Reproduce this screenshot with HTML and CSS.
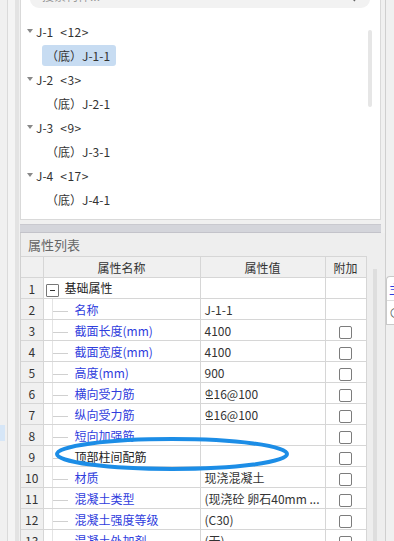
FILE: index.html
```html
<!DOCTYPE html>
<html lang="zh-CN">
<head>
    <meta charset="UTF-8">
    <meta name="viewport" content="width=device-width, initial-scale=1.0">
    <title>属性列表</title>
    <link rel="stylesheet" href="styles.css">
</head>
<body>
    <div class="screen">
        <div class="gutter">
            <div class="gutter-mark"></div>
        </div>

        <div class="workspace">
            <div class="tree-panel">
                <div class="search">
                    <span>搜索构件...</span>
                    <svg class="search-icon" width="10" height="10" viewBox="0 0 10 10">
                        <circle cx="4" cy="4" r="3" fill="none" stroke="#666" stroke-width="1.2"/>
                        <line x1="6.2" y1="6.2" x2="9" y2="9" stroke="#666" stroke-width="1.4"/>
                    </svg>
                </div>
                <div class="tree-body">
                    <div class="tree-list">
                        <div class="node"><i class="caret"></i>J-1<span class="count">&lt;12&gt;</span></div>
                        <div class="leaf"><span class="leaf-label selected">（底）J-1-1</span></div>
                        <div class="node"><i class="caret"></i>J-2<span class="count">&lt;3&gt;</span></div>
                        <div class="leaf"><span class="leaf-label">（底）J-2-1</span></div>
                        <div class="node"><i class="caret"></i>J-3<span class="count">&lt;9&gt;</span></div>
                        <div class="leaf"><span class="leaf-label">（底）J-3-1</span></div>
                        <div class="node"><i class="caret"></i>J-4<span class="count">&lt;17&gt;</span></div>
                        <div class="leaf"><span class="leaf-label">（底）J-4-1</span></div>
                        <div class="node"><i class="caret"></i>J-5<span class="count">&lt;6&gt;</span></div>
                    </div>
                    <div class="tree-scroll"><div class="thumb"></div></div>
                </div>
            </div>

            <div class="split-bar"></div>

            <div class="props">
                <div class="props-title">属性列表</div>
                <div class="props-body">
                    <table class="grid">
                        <colgroup>
                            <col class="c-num">
                            <col class="c-name">
                            <col class="c-val">
                            <col class="c-add">
                        </colgroup>
                        <tr>
                            <th></th>
                            <th>属性名称</th>
                            <th>属性值</th>
                            <th>附加</th>
                        </tr>
                        <tr>
                            <td class="num">1</td>
                            <td class="name group"><i class="fold"></i><span class="plain">基础属性</span></td>
                            <td class="val"></td>
                            <td class="add"></td>
                        </tr>
                        <tr>
                            <td class="num">2</td>
                            <td class="name"><i class="link"></i><span class="name-text">名称</span></td>
                            <td class="val">J-1-1</td>
                            <td class="add"></td>
                        </tr>
                        <tr>
                            <td class="num">3</td>
                            <td class="name"><i class="link"></i><span class="name-text">截面长度(mm)</span></td>
                            <td class="val">4100</td>
                            <td class="add"><i class="check"></i></td>
                        </tr>
                        <tr>
                            <td class="num">4</td>
                            <td class="name"><i class="link"></i><span class="name-text">截面宽度(mm)</span></td>
                            <td class="val">4100</td>
                            <td class="add"><i class="check"></i></td>
                        </tr>
                        <tr>
                            <td class="num">5</td>
                            <td class="name"><i class="link"></i><span class="name-text">高度(mm)</span></td>
                            <td class="val">900</td>
                            <td class="add"><i class="check"></i></td>
                        </tr>
                        <tr>
                            <td class="num">6</td>
                            <td class="name"><i class="link"></i><span class="name-text">横向受力筋</span></td>
                            <td class="val"><span class="steel">Φ</span>16@100</td>
                            <td class="add"><i class="check"></i></td>
                        </tr>
                        <tr>
                            <td class="num">7</td>
                            <td class="name"><i class="link"></i><span class="name-text">纵向受力筋</span></td>
                            <td class="val"><span class="steel">Φ</span>16@100</td>
                            <td class="add"><i class="check"></i></td>
                        </tr>
                        <tr>
                            <td class="num">8</td>
                            <td class="name"><i class="link"></i><span class="name-text">短向加强筋</span></td>
                            <td class="val"></td>
                            <td class="add"><i class="check"></i></td>
                        </tr>
                        <tr>
                            <td class="num">9</td>
                            <td class="name"><i class="link"></i><span class="plain">顶部柱间配筋</span></td>
                            <td class="val"></td>
                            <td class="add"><i class="check"></i></td>
                        </tr>
                        <tr>
                            <td class="num">10</td>
                            <td class="name"><i class="link"></i><span class="name-text">材质</span></td>
                            <td class="val">现浇混凝土</td>
                            <td class="add"><i class="check"></i></td>
                        </tr>
                        <tr>
                            <td class="num">11</td>
                            <td class="name"><i class="link"></i><span class="name-text">混凝土类型</span></td>
                            <td class="val">(现浇砼 卵石40mm ...</td>
                            <td class="add"><i class="check"></i></td>
                        </tr>
                        <tr>
                            <td class="num">12</td>
                            <td class="name"><i class="link"></i><span class="name-text">混凝土强度等级</span></td>
                            <td class="val">(C30)</td>
                            <td class="add"><i class="check"></i></td>
                        </tr>
                        <tr>
                            <td class="num">13</td>
                            <td class="name"><i class="link"></i><span class="name-text">混凝土外加剂</span></td>
                            <td class="val">(无)</td>
                            <td class="add"><i class="check"></i></td>
                        </tr>
                    </table>
                    <div class="grid-scroll"><div class="thumb"></div></div>
                </div>
            </div>
        </div>

        <div class="side">
            <div class="side-card">
                <div class="side-line blue">主</div>
                <div class="side-line">⊙</div>
            </div>
        </div>

        <!-- hand-drawn highlight over row 9 -->
        <svg class="annot" width="394" height="541" viewBox="0 0 394 541">
            <ellipse cx="172" cy="454" rx="115" ry="15" fill="none" stroke="#1c8de6" stroke-width="4"/>
        </svg>
    </div>
</body>
</html>
```

FILE: styles.css
```css
body {
    margin: 0;
    background-color: #f0f0f0;
    font-family: "Noto Sans CJK SC", "Microsoft YaHei", sans-serif;
    font-size: 12px;
    color: #333;
    overflow: hidden;
}
.screen {
    position: relative;
    display: flex;
    width: 394px;
    height: 541px;
    overflow: hidden;
}
.gutter {
    width: 20px;
    flex: none;
    background: linear-gradient(to right, #f0f0f0 0 7px, #dadada 7px 8px, #f4f4f4 8px 15px, #e3e3e3 15px 19px, #f0f0f0 19px);
}
.gutter-mark {
    margin-top: 425px;
    width: 5px;
    height: 16px;
    background-color: #d6e6f7;
}
.workspace {
    width: 365px;
    flex: none;
    display: flex;
    flex-direction: column;
}

/* component tree */
.tree-panel {
    width: 359px;
    height: 219px;
    flex: none;
    border: 1px solid #d9d9d9;
    border-top: 0;
    background-color: #fff;
    display: flex;
    flex-direction: column;
    overflow: hidden;
}
.search {
    flex: none;
    margin: -22px 0 0 9px;
    width: 340px;
    height: 30px;
    box-sizing: border-box;
    padding: 0 14px 4px 12px;
    background-color: #f2f2f2;
    border-radius: 0 0 9px 9px;
    display: flex;
    align-items: flex-end;
    justify-content: space-between;
    color: #999;
}
.search-icon {
    margin-bottom: 2px;
}
.tree-body {
    display: flex;
    flex: 1;
    min-height: 0;
}
.tree-list {
    flex: 1;
    padding: 11px 0 0 6px;
}
.node {
    height: 24px;
    display: flex;
    align-items: center;
    color: #333;
}
.count {
    margin-left: 7px;
    letter-spacing: 0.5px;
}
.caret {
    width: 0;
    height: 0;
    border-left: 3px solid transparent;
    border-right: 3px solid transparent;
    border-top: 4px solid #888;
    margin-right: 3px;
}
.leaf {
    height: 24px;
    display: flex;
    align-items: center;
    padding-left: 15px;
}
.leaf-label {
    height: 21px;
    line-height: 21px;
    padding: 0 6px 0 4px;
    border-radius: 3px;
    color: #333;
}
.leaf-label.selected {
    background-color: #c7dcf2;
}
.tree-scroll {
    width: 4px;
    margin: 22px 8px 0 0;
}
.tree-scroll .thumb {
    height: 77px;
    background-color: #e6e6e6;
    border-radius: 2px;
}

.split-bar {
    flex: none;
    width: 361px;
    height: 7px;
    margin-top: 4px;
    background-color: #d4d5db;
    border-top: 1px solid #c9c9cf;
    border-bottom: 1px solid #c3c3ca;
}

/* property list */
.props {
    flex: 1;
    background-color: #eeeeee;
    border-left: 1px solid #d0d0d0;
    display: flex;
    flex-direction: column;
}
.props-title {
    height: 23px;
    line-height: 23px;
    padding-left: 7px;
    color: #666;
    font-size: 13px;
}
.props-body {
    display: flex;
    flex: 1;
}
.grid {
    border-collapse: collapse;
    table-layout: fixed;
    width: 345px;
    flex: none;
    align-self: flex-start;
}
.c-num { width: 22px; }
.c-name { width: 157px; }
.c-val { width: 125px; }
.c-add { width: 41px; }
.grid th,
.grid td {
    height: 20px;
    padding: 0;
    border: 1px solid #d6d6d6;
    white-space: nowrap;
    overflow: hidden;
}
.grid tr > :first-child {
    border-left: 0;
}
.grid th {
    font-weight: normal;
    background-color: #f0f0f0;
    color: #333;
    text-align: center;
}
.grid td {
    background-color: #fff;
}
.grid td.num {
    background-color: #f0f0f0;
    text-align: center;
    color: #333;
}
.grid td.name {
    background-image: linear-gradient(#e4e4e4, #e4e4e4);
    background-repeat: no-repeat;
    background-position: 8px 0;
    background-size: 1px 100%;
}
.grid td.group {
    background-image: none;
}
.fold {
    display: inline-block;
    position: relative;
    width: 11px;
    height: 11px;
    margin: 0 6px 0 2px;
    border: 1px solid #777;
    border-radius: 1px;
    vertical-align: middle;
    background-color: #fff;
}
.fold::after {
    content: "";
    position: absolute;
    left: 3px;
    right: 3px;
    top: 5px;
    height: 1px;
    background-color: #333;
}
.link {
    display: inline-block;
    width: 15px;
    height: 1px;
    margin: 0 7px 0 9px;
    background-color: #d0d0d0;
    vertical-align: middle;
}
.name-text {
    color: #2f3ddd;
}
.plain {
    color: #222;
}
.grid td.val {
    padding-left: 4px;
    color: #333;
}
.grid td.add {
    text-align: center;
}
.check {
    display: inline-block;
    width: 11px;
    height: 11px;
    border: 1px solid #7c7c7c;
    border-radius: 2px;
    background-color: #fff;
    vertical-align: middle;
}
.steel {
    display: inline-block;
    position: relative;
    width: 9px;
    font-size: 10px;
    line-height: 10px;
    vertical-align: 2px;
    text-align: center;
}
.steel::after {
    content: "";
    position: absolute;
    left: 1px;
    right: 1px;
    bottom: -1px;
    height: 1px;
    background-color: #333;
}
.grid-scroll {
    flex: 1;
    padding: 13px 0 0 6px;
}
.grid-scroll .thumb {
    width: 4px;
    height: 300px;
    background-color: #dedede;
}

/* neighbouring panel, mostly off screen */
.side {
    flex: 1;
    border-left: 1px solid #cfcfcf;
    background-color: #f0f0f0;
}
.side-card {
    margin-top: 276px;
    background-color: #fff;
    border: 1px solid #c9c9c9;
    border-right: 0;
    border-radius: 4px 0 0 0;
}
.side-line {
    height: 23px;
    line-height: 23px;
    padding-left: 2px;
    color: #666;
    white-space: nowrap;
    overflow: hidden;
}
.side-line.blue {
    color: #2f3ddd;
    border-bottom: 1px solid #ddd;
}

.annot {
    position: absolute;
    left: 0;
    top: 0;
    pointer-events: none;
}
```
